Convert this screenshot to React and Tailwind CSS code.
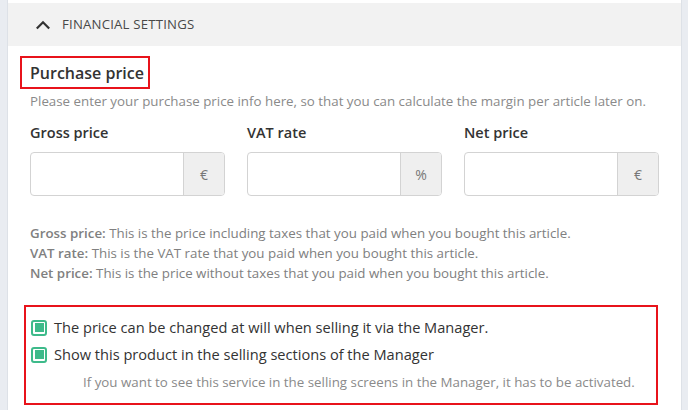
import React from "react";

function Field({ label, unit }) {
  return (
    <div className="w-[195px]">
      <div className="text-[14.5px] leading-[20px] font-semibold text-[#333]">{label}</div>
      <div className="mt-[9px] flex h-[44px] rounded-[4px] border border-[#d3d3d3] overflow-hidden bg-white">
        <div className="flex-1" />
        <div className="w-[41px] border-l border-[#d3d3d3] bg-[#efefef] flex items-center justify-center text-[14px] text-[#777]">
          {unit}
        </div>
      </div>
    </div>
  );
}

function Check({ children }) {
  return (
    <div className="flex items-center h-[27px]">
      <div className="w-[16px] h-[16px] rounded-[3px] border-2 border-[#3dba8a] bg-white flex items-center justify-center">
        <div className="w-[9px] h-[9px] bg-[#3dba8a]" />
      </div>
      <span className="ml-[7px] text-[14.6px] text-[#333]">{children}</span>
    </div>
  );
}

export default function App() {
  return (
    <div
      className="w-[688px] h-[410px] flex bg-white overflow-hidden"
      style={{ fontFamily: '"Open Sans", "Noto Sans", sans-serif' }}
    >
      <div className="w-[8px] bg-[#e9ecf1] border-r border-[#dde1e7]" />
      <div className="flex-1 pt-[3px]">
        <div className="h-[43px] bg-[#f2f2f2] flex items-center pl-[27px]">
          <svg width="16" height="10" viewBox="0 0 16 10" fill="none">
            <path d="M1.8 8.5 L8 2.3 L14.2 8.5" stroke="#333" strokeWidth="2.2" />
          </svg>
          <span className="ml-[11px] text-[13.2px] text-[#484848] tracking-[0.2px]">FINANCIAL SETTINGS</span>
        </div>
        <div className="pl-[12px]">
          <div className="mt-[10px] inline-flex items-center h-[33px] w-[130px] border-2 border-[#e8131b] pl-[8px]">
            <span className="text-[16px] font-semibold text-[#333] whitespace-nowrap">Purchase price</span>
          </div>
          <div className="pl-[10px]">
            <div className="mt-[3px] text-[13.33px] leading-[18px] text-[#8a8a8a] whitespace-nowrap">
              Please enter your purchase price info here, so that you can calculate the margin per article later on.
            </div>
            <div className="mt-[13px] flex gap-[22px]">
              <Field label="Gross price" unit="€" />
              <Field label="VAT rate" unit="%" />
              <Field label="Net price" unit="€" />
            </div>
            <div className="mt-[27px] text-[13.33px] leading-[20px] text-[#808080] whitespace-nowrap">
              <div><span className="font-semibold">Gross price:</span> This is the price including taxes that you paid when you bought this article.</div>
              <div><span className="font-semibold">VAT rate:</span> This is the VAT rate that you paid when you bought this article.</div>
              <div><span className="font-semibold">Net price:</span> This is the price without taxes that you paid when you bought this article.</div>
            </div>
          </div>
          <div className="mt-[22px] ml-[4px] w-[634px] h-[100px] border-2 border-[#e8131b] pl-[5px] pt-[7px]">
            <Check>The price can be changed at will when selling it via the Manager.</Check>
            <Check>Show this product in the selling sections of the Manager</Check>
            <div className="mt-[4px] pl-[52px] text-[13.33px] leading-[20px] text-[#8a8a8a] whitespace-nowrap">
              If you want to see this service in the selling screens in the Manager, it has to be activated.
            </div>
          </div>
        </div>
      </div>
      <div className="w-[7px] bg-[#e9ecf1] border-l border-[#dde1e7]" />
    </div>
  );
}
